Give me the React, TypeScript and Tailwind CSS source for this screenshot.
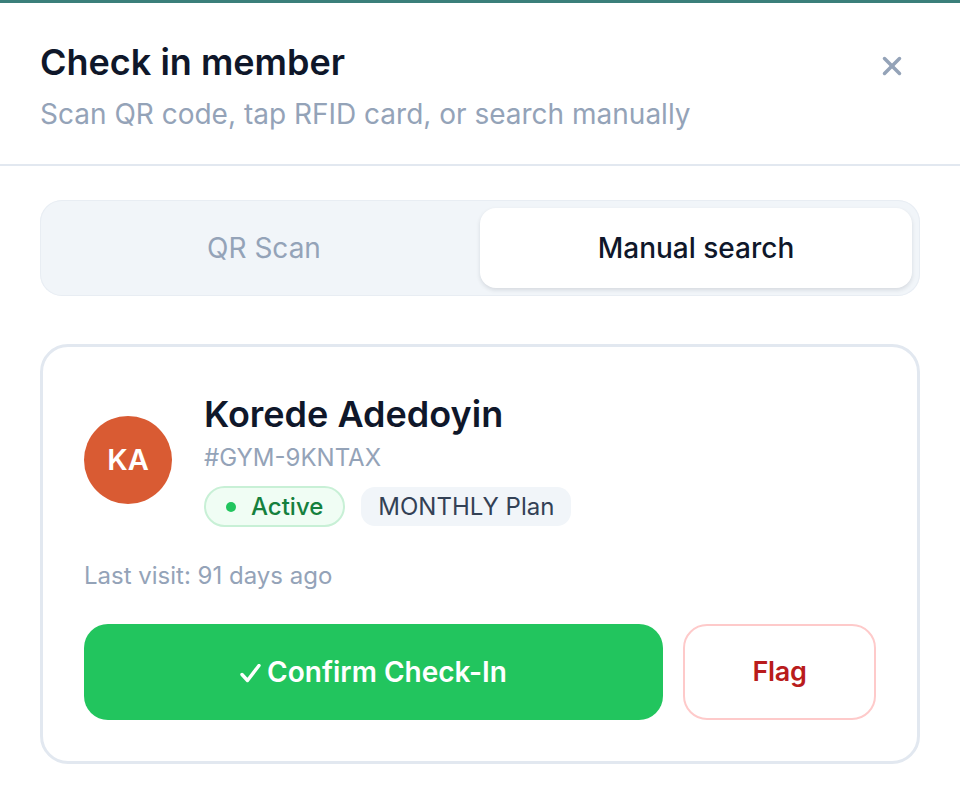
import { X } from "lucide-react";

const font = { fontFamily: "Inter, 'Noto Sans', sans-serif" };

// Thick checkmark glyph used in the confirm button
const CheckGlyph = () => (
  <svg width="21" height="19" viewBox="0 0 21 19" fill="none" className="mt-[2px]">
    <path d="M2 10.5 L7.5 16.5 L19 1.5" stroke="white" strokeWidth="3.4" strokeLinecap="round" strokeLinejoin="round" />
  </svg>
);

export default function App() {
  return (
    <div className="min-h-[788px] w-[960px] bg-white border-t-[3px] border-[#3b7f7a]" style={font}>
      {/* Header */}
      <div className="flex items-start justify-between px-10 pt-[37px] pb-[32px] border-b-2 border-[#e2e8f0]">
        <div>
          <h2 className="text-[36px] leading-[44px] font-semibold text-[#0f172a]">Check in member</h2>
          <p className="mt-[12px] text-[28px] leading-[36px] text-[#94a3b8]">Scan QR code, tap RFID card, or search manually</p>
        </div>
        <button className="mt-[11px] mr-[13px] text-[#94a3b8]">
          <X size={30} strokeWidth={2.8} />
        </button>
      </div>

      <div className="px-10 pt-[34px]">
        {/* Tabs */}
        <div className="grid grid-cols-2 p-2 rounded-[22px] bg-[#f1f5f9] shadow-[inset_0_0_0_1px_#e8edf3]">
          <button className="h-20 rounded-2xl text-[28px] text-[#94a3b8]">QR Scan</button>
          <button className="h-20 rounded-2xl bg-white text-[28px] font-medium text-[#0f172a] shadow-[0_2px_4px_rgba(15,23,42,0.12)]">
            Manual search
          </button>
        </div>

        {/* Member card */}
        <div className="mt-12 rounded-[28px] border-[3px] border-[#e2e8f0] px-[41px] pt-[45px] pb-[41px]">
          <div className="flex items-center gap-8">
            <div className="flex h-[88px] w-[88px] shrink-0 items-center justify-center rounded-full bg-[#d95b33] text-[29px] font-semibold text-white">
              KA
            </div>
            <div>
              <div className="text-[36px] leading-[44px] font-semibold text-[#0f172a]">Korede Adedoyin</div>
              <div className="mt-[6px] text-[24px] leading-[32px] text-[#94a3b8]">#GYM-9KNTAX</div>
              <div className="mt-[12px] flex items-center gap-4">
                <span className="flex h-[41px] items-center gap-[15px] rounded-full border-2 border-[#c8f0d6] bg-[#f0fdf4] px-5 text-[24px] font-medium text-[#15803d]">
                  <span className="h-[10px] w-[10px] rounded-full bg-[#22c55e]" />
                  Active
                </span>
                <span className="flex h-[39px] items-center rounded-[14px] bg-[#f1f5f9] px-[17px] text-[24px] text-[#334155]">
                  MONTHLY Plan
                </span>
              </div>
            </div>
          </div>

          <p className="mt-[33px] text-[24px] leading-[32px] text-[#94a3b8]">Last visit: 91 days ago</p>

          <div className="mt-[32px] flex gap-5">
            <button className="flex h-24 flex-1 items-center justify-center gap-[6px] rounded-[24px] bg-[#22c55e] text-[28px] font-semibold text-white">
              <CheckGlyph />
              Confirm Check-In
            </button>
            <button className="h-24 w-[193px] rounded-[24px] border-2 border-[#fecaca] bg-white text-[27px] font-semibold tracking-[-0.3px] text-[#b91c1c]">
              Flag
            </button>
          </div>
        </div>
      </div>
    </div>
  );
}
